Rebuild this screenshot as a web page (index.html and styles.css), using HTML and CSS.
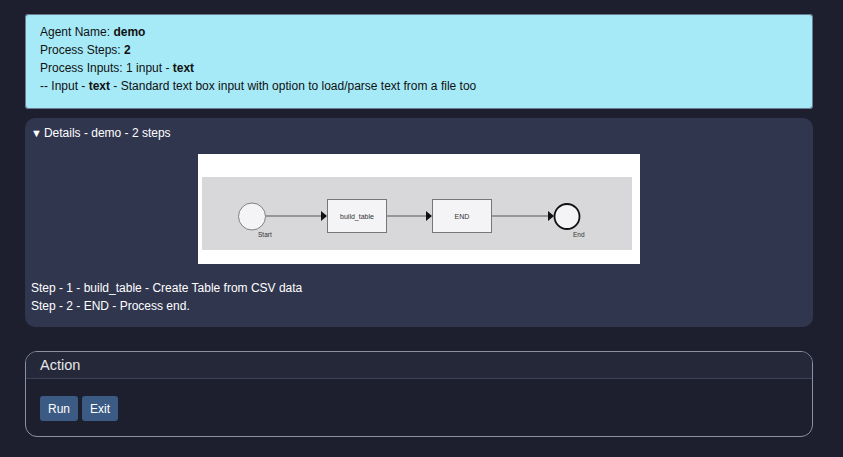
FILE: index.html
```html
<!DOCTYPE html>
<html>
<head>
<meta charset="utf-8">
<link rel="stylesheet" href="styles.css">
</head>
<body>
<div class="page">
  <div class="info">
    <div class="line">Agent Name: <b>demo</b></div>
    <div class="line">Process Steps: <b>2</b></div>
    <div class="line">Process Inputs: 1 input - <b>text</b></div>
    <div class="line">-- Input - <b>text</b> - Standard text box input with option to load/parse text from a file too</div>
  </div>
  <details class="details" open>
    <summary class="summary">Details - demo - 2 steps</summary>
    <div class="diagram-wrap">
      <svg class="diagram" width="442" height="110" viewBox="0 0 442 110">
        <rect x="0" y="0" width="442" height="110" fill="#ffffff"/>
        <rect x="4" y="23" width="430" height="73" fill="#d8d8da"/>
        <line x1="68" y1="62" x2="125" y2="62" stroke="#555" stroke-width="1"/>
        <polygon points="123,57 129,62 123,67" fill="#111"/>
        <line x1="189" y1="62" x2="230" y2="62" stroke="#555" stroke-width="1"/>
        <polygon points="228,57 234,62 228,67" fill="#111"/>
        <line x1="294" y1="62" x2="351" y2="62" stroke="#555" stroke-width="1"/>
        <polygon points="350,57 356,62 350,67" fill="#111"/>
        <circle cx="54" cy="62.5" r="13.5" fill="#f4f4f7" stroke="#666" stroke-width="0.8"/>
        <text x="60" y="83" class="lbl">Start</text>
        <rect x="129.5" y="45.5" width="59" height="33" fill="#f4f4f7" stroke="#777" stroke-width="1"/>
        <text x="159" y="65" class="box-t" text-anchor="middle">build_table</text>
        <rect x="234.5" y="45.5" width="59" height="33" fill="#f4f4f7" stroke="#777" stroke-width="1"/>
        <text x="264" y="65" class="box-t" text-anchor="middle">END</text>
        <circle cx="369" cy="62.5" r="12.5" fill="#f4f4f7" stroke="#111" stroke-width="1.8"/>
        <text x="375" y="83" class="lbl">End</text>
      </svg>
    </div>
    <div class="steps">
      <div class="line">Step - 1 - build_table - Create Table from CSV data</div>
      <div class="line">Step - 2 - END - Process end.</div>
    </div>
  </details>
  <div class="action">
    <div class="action-head">Action</div>
    <div class="action-body">
      <button class="btn">Run</button>
      <button class="btn">Exit</button>
    </div>
  </div>
</div>
</body>
</html>
```
FILE: styles.css
```css
html, body {
  margin: 0;
  padding: 0;
  background: #1d1f2f;
  font-family: "Liberation Sans", Arial, sans-serif;
  font-size: 12px;
}
.page {
  width: 788px;
  margin-left: 25px;
  padding-top: 14px;
}
.info {
  background: #a6eaf8;
  color: #111;
  border-radius: 4px;
  padding: 9px 15px 14px;
  box-shadow: 0 0 0 1px #6a7a90 inset;
}
.line {
  line-height: 18px;
  height: 18px;
}
.details {
  margin-top: 9px;
  background: #31364f;
  border-radius: 10px;
  color: #fff;
  padding: 8px 6px 12px;
}
.summary {
  line-height: 14px;
  height: 14px;
  cursor: pointer;
  list-style: none;
}
.summary::-webkit-details-marker {
  display: none;
}
.summary::before {
  content: "\25BC";
  font-size: 11px;
  margin-right: 2px;
}
.diagram-wrap {
  display: flex;
  justify-content: center;
  margin-top: 14px;
}
.diagram {
  display: block;
}
.lbl {
  font-family: "Liberation Sans", Arial, sans-serif;
  font-size: 6.5px;
  fill: #333;
}
.box-t {
  font-family: "Liberation Sans", Arial, sans-serif;
  font-size: 7px;
  fill: #333;
}
.steps {
  margin-top: 15px;
}
.action {
  margin-top: 24px;
  border: 1px solid #8c90a2;
  border-radius: 12px;
  overflow: hidden;
}
.action-head {
  background: #252839;
  color: #e6e6ea;
  font-size: 14.5px;
  padding: 0 14px;
  height: 26px;
  line-height: 26px;
  border-bottom: 1px solid #3e4155;
}
.action-body {
  padding: 17px 14px 14px;
  display: flex;
  gap: 4px;
  height: 26px;
}
.btn {
  background: #3b5b84;
  color: #fff;
  border: none;
  border-radius: 3px;
  font-family: "Liberation Sans", Arial, sans-serif;
  font-size: 12px;
  height: 25px;
  padding: 0 8px;
}
```
